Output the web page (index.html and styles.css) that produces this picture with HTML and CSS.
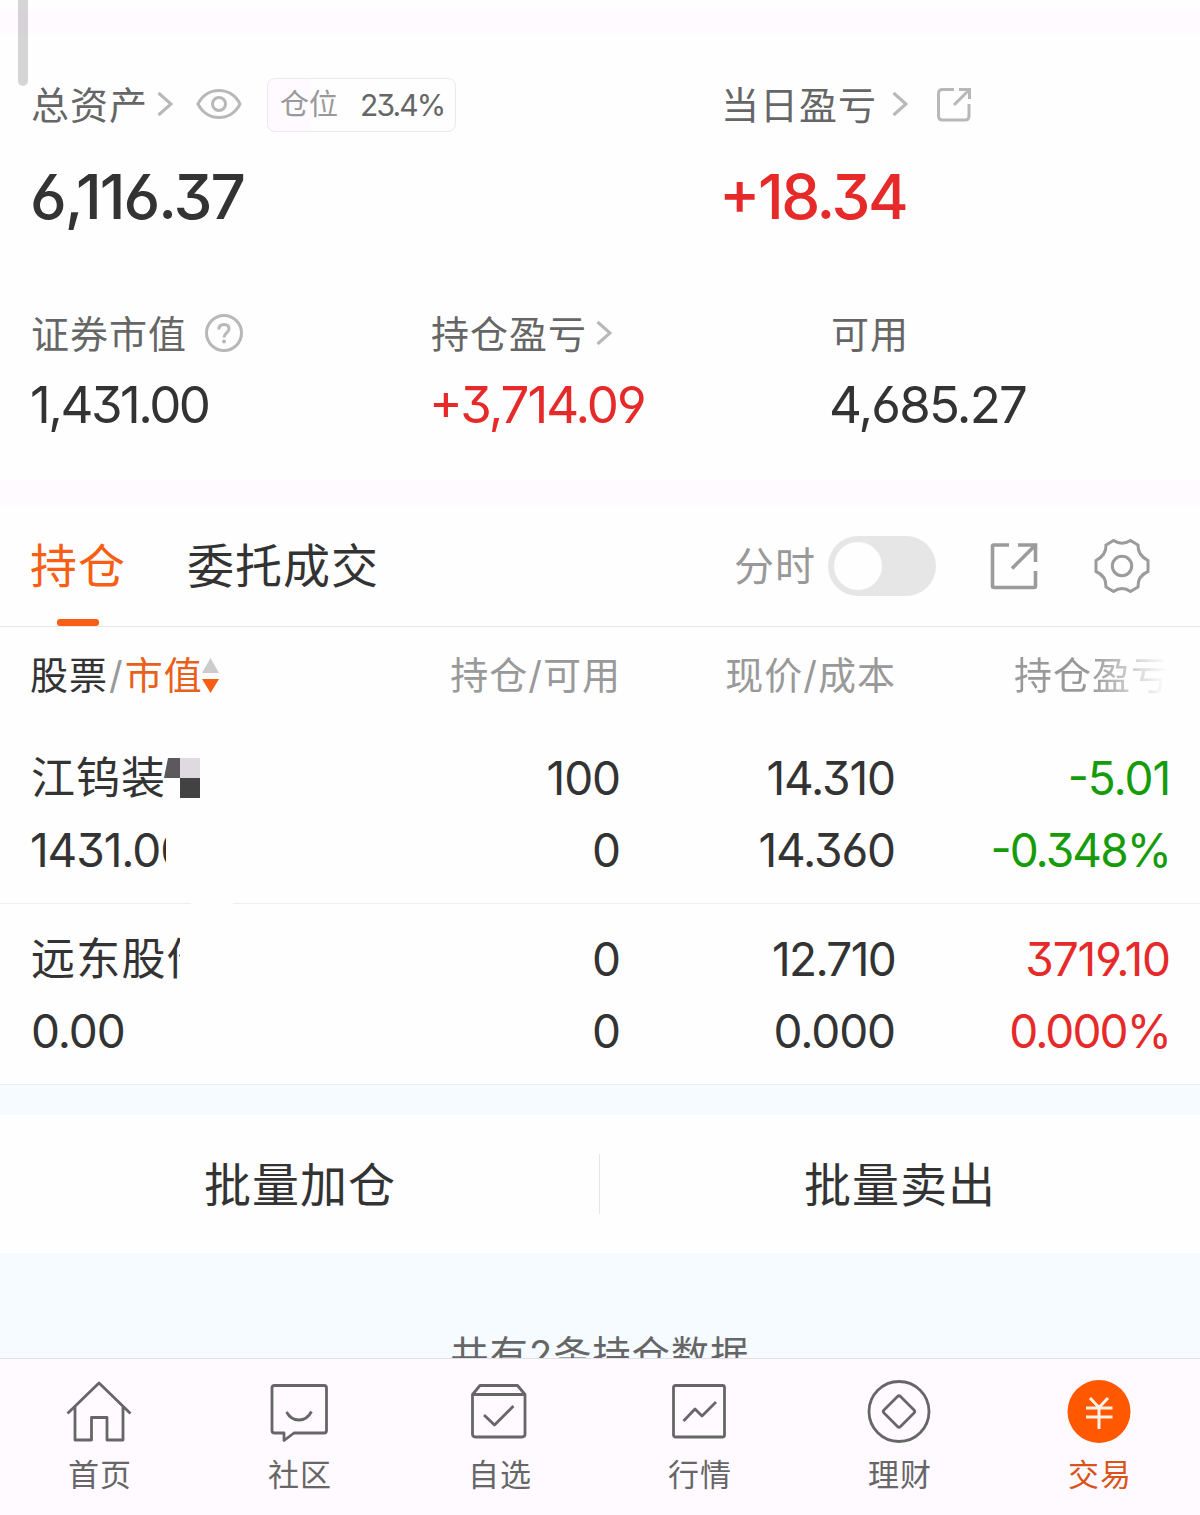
FILE: index.html
```html
<!DOCTYPE html>
<html lang="zh-CN">
<head>
<meta charset="utf-8">
<title>持仓</title>
<link rel="stylesheet" href="styles.css">
</head>
<body>
<main class="page">
  <div class="band band-top"></div>
  <section class="summary">
    <div class="summary-row labels-main">
      <div class="cell wide">
        <span class="label">总资产</span>
        <svg class="chev chev-a" width="16" height="26" viewBox="0 0 16 26"><path d="M1.500 2L14 13L1.500 24"/></svg>
        <svg class="eye" width="46" height="32" viewBox="0 0 46 32"><path d="M2 16C11-2 35-2 44 16C35 34 11 34 2 16Z"/><circle cx="23" cy="16" r="6.500"/></svg>
        <span class="badge"><span class="badge-name">仓位</span><span class="badge-value">23.4%</span></span>
      </div>
      <div class="cell">
        <span class="label">当日盈亏</span>
        <svg class="chev chev-b" width="16" height="26" viewBox="0 0 16 26"><path d="M1.500 2L14 13L1.500 24"/></svg>
        <svg class="share" width="36" height="36" viewBox="0 0 36 36"><path d="M18 2.500H6.500Q2.500 2.500 2.500 6.500V29Q2.500 33 6.500 33H29Q33 33 33 29V17M18 18L33 3M23 2.500H33.500V12"/></svg>
      </div>
    </div>
    <div class="summary-row values-main">
      <div class="cell wide"><span class="n-assets">6,116.37</span></div>
      <div class="cell"><span class="n-day red">+18.34</span></div>
    </div>
    <div class="summary-row labels-sub">
      <div class="cell third">
        <span class="label">证券市值</span>
        <svg class="help" width="40" height="40" viewBox="0 0 40 40"><circle cx="20" cy="20" r="17.500"/><path d="M14.800 16.500Q15 11.500 20 11.500T25 16.300C25 19.500 20 20 20 24.500"/><circle class="dot" cx="20" cy="28.500" r="2"/></svg>
      </div>
      <div class="cell third">
        <span class="label">持仓盈亏</span>
        <svg class="chev chev-c" width="16" height="26" viewBox="0 0 16 26"><path d="M1.500 2L14 13L1.500 24"/></svg>
      </div>
      <div class="cell"><span class="label">可用</span></div>
    </div>
    <div class="summary-row values-sub">
      <div class="cell third"><span class="n-market">1,431.00</span></div>
      <div class="cell third"><span class="n-profit red">+3,714.09</span></div>
      <div class="cell"><span class="n-cash">4,685.27</span></div>
    </div>
  </section>
  <div class="band"></div>
  <nav class="tabs">
    <span class="tab active">持仓</span>
    <span class="tab">委托成交</span>
    <div class="tools">
      <span class="tool-label">分时</span>
      <span class="switch"><span class="knob"></span></span>
      <svg class="tool-share" width="48" height="48" viewBox="0 0 48 48"><path d="M19 3H4Q2.500 3 2.500 4.500V44Q2.500 45.500 4 45.500H44Q45.500 45.500 45.500 44V29M28 3H45.500V20M22 26.500L45 3.500"/></svg>
      <svg class="gear" width="56" height="56" viewBox="0 0 56 56"><path d="M19.500 2.500Q28 8 36.500 2.500L44 7Q43.500 17 54 22.500V33.500Q43.500 38 44 49L36.500 53.500Q28 47.500 19.500 53.500L12 49Q12.500 38 2 33.500V22.500Q12.500 17 12 7Z"/><circle cx="28" cy="28" r="9.700"/></svg>
    </div>
  </nav>
  <section class="table">
    <div class="grid head">
      <div class="first"><span class="dark">股票</span><span class="slash">/</span><span class="orange">市值</span><svg class="sort" width="17" height="36" viewBox="0 0 17 36"><path fill="#ccc" d="M8.500 0L17 15H0Z"/><path fill="#f95f14" d="M0 21H17L8.500 35Z"/></svg></div>
      <div class="shift">持仓/可用</div>
      <div class="shift">现价/成本</div>
      <div class="fade">持仓盈亏</div>
    </div>
    <div class="grid holding divided">
      <div class="first"><span class="name">江钨装</span><svg class="mosaic" width="36" height="40" viewBox="0 0 36 40"><path fill="#5c595e" d="M4 0H16V20H0Z"/><path fill="#dfdadf" d="M16 0H36V20H16Z"/><path fill="#424242" d="M16 20H36V40H16Z"/></svg></div>
      <div>100</div>
      <div>14.310</div>
      <div class="green">-5.01</div>
      <div class="first"><span class="clip clip-value">1431.00</span></div>
      <div>0</div>
      <div>14.360</div>
      <div class="green percent">-0.348%</div>
    </div>
    <div class="grid holding last">
      <div class="first"><span class="name clip clip-name">远东股份</span></div>
      <div>0</div>
      <div class="tight">12.710</div>
      <div class="red">3719.10</div>
      <div class="first">0.00</div>
      <div>0</div>
      <div>0.000</div>
      <div class="red percent">0.000%</div>
    </div>
  </section>
  <div class="gap"></div>
  <section class="actions">
    <span class="action">批量加仓</span>
    <span class="divider"></span>
    <span class="action">批量卖出</span>
  </section>
  <div class="footer"><span>共有2条持仓数据</span></div>
  <nav class="bottom">
    <div class="item"><svg width="66" height="66" viewBox="0 0 66 66"><path d="M1.500 34.500L33 4L64.500 34.500M9 28V61H25.500V38.500H41V61H57V28"/></svg><span>首页</span></div>
    <div class="item"><svg width="66" height="66" viewBox="0 0 66 66"><path d="M8.500 6.500H58Q60.500 6.500 60.500 9V51.500Q60.500 54 58 54H28L18 61.500V54H8.500Q6 54 6 51.500V9Q6 6.500 8.500 6.500ZM20.500 33Q25 41 33 41T45.500 32.500"/></svg><span>社区</span></div>
    <div class="item"><svg width="66" height="66" viewBox="0 0 66 66"><path d="M6.500 15.500L14 6.500H51.500L59 15.500V55Q59 58 56 58H9.500Q6.500 58 6.500 55ZM6.500 15.500H59M18 36L28.500 46L47.500 27"/></svg><span>自选</span></div>
    <div class="item"><svg width="66" height="66" viewBox="0 0 66 66"><rect x="7.500" y="6.500" width="51" height="51.500" rx="2"/><path d="M17.500 42L29 30L36 37L50 23"/></svg><span>行情</span></div>
    <div class="item"><svg width="66" height="66" viewBox="0 0 66 66"><circle cx="33" cy="32.500" r="30"/><path d="M31.500 17.500Q33 16 34.500 17.500L48 31Q49.500 32.500 48 34L34.500 47.500Q33 49 31.500 47.500L18 34Q16.500 32.500 18 31Z"/></svg><span>理财</span></div>
    <div class="item current"><svg width="66" height="66" viewBox="0 0 66 66"><circle class="disc" cx="33" cy="32.500" r="31.500"/><path class="yen" d="M24 19L33 28.500L42 19M20 29H46.500M20 38H46.500M33 28V50"/></svg><span>交易</span></div>
  </nav>
  <div class="scrollbar"></div>
</main>
</body>
</html>
```
FILE: styles.css
```css
* { box-sizing: border-box; }
body {
  margin: 0;
  background: #fff;
  color: #333;
  font-family: "Inter", "Noto Sans CJK SC", sans-serif;
  font-feature-settings: "cv09", "cv03", "cv04", "case";
}
svg { display: block; flex: none; fill: none; stroke: #b9b7b9; stroke-width: 3; }
.page { position: relative; width: 1200px; height: 1515px; overflow: hidden; background: #fefefe; display: flex; flex-direction: column; }
.page > * { flex: none; }
.red { color: #e62a2a; }
.green { color: #169b0b; }
.orange { color: #e8601c; }
.dark { color: #333; }
.slash { padding: 0 1px; }

.band { height: 25px; background: #fefaff; }
.band-top { margin-top: 9px; height: 24px; }
.scrollbar { position: absolute; left: 18px; top: 0; width: 10px; height: 86px; border-radius: 0 0 5px 5px; background: rgba(0, 0, 0, .16); }

.summary { height: 447px; padding-left: 31px; padding-top: 41px; }
.summary-row { display: flex; align-items: center; white-space: nowrap; }
.cell { display: flex; align-items: center; }
.wide { width: 690px; }
.third { width: 400px; }
.label { padding-top: 2px; font-size: 38px; letter-spacing: 1px; line-height: 60px; color: #666; }
.labels-main { height: 60px; }
.values-main { height: 80px; margin-top: 22px; font-weight: 500; }
.labels-sub { height: 60px; margin-top: 67px; }
.values-sub { height: 70px; margin-top: 6px; }
.n-assets { font-size: 62px; letter-spacing: -2px; margin-left: -1px; }
.n-day { font-size: 62px; letter-spacing: -2.4px; margin-left: -2px; }
.n-market, .n-profit, .n-cash { font-size: 51px; }
.n-market { letter-spacing: -2.5px; margin-left: -1px; }
.n-profit { letter-spacing: -2px; margin-left: -2px; }
.n-cash { letter-spacing: -1.8px; margin-left: -2px; }
.chev-a { margin-left: 9px; }
.chev-b { margin-left: 15px; }
.chev-c { margin-left: 9px; }
.eye { margin-left: 23px; }
.badge { display: flex; align-items: center; margin-left: 25px; margin-top: 1px; width: 189px; height: 54px; padding-left: 12px; border: 1.5px solid #ebe9eb; border-radius: 8px; background: linear-gradient(90deg, #fefaff 43px, #fefefe 43px); }
.badge-name { padding-top: 1px; font-size: 29px; line-height: 50px; color: #999; width: 80px; }
.badge-value { font-size: 30px; letter-spacing: -1.9px; color: #666; }
.share { margin-left: 28px; margin-top: 2px; }
.help { margin-left: 17px; }
.help .dot { fill: #b9b7b9; stroke: none; }

.tabs { height: 122px; display: flex; padding-left: 30px; border-bottom: 1px solid #e8e8e8; white-space: nowrap; }
.tab { position: relative; font-size: 47px; letter-spacing: 1px; line-height: 122px; margin-right: 61px; }
.active { color: #f95f14; }
.active::after { content: ""; position: absolute; left: 27px; bottom: 0; width: 42px; height: 7px; border-radius: 3px; background: #f95f14; }
.tools { margin-left: auto; display: flex; align-items: center; padding-right: 50px; }
.tools svg { stroke: #9b9b9b; }
.tool-label { font-size: 40px; line-height: 120px; padding-top: 2px; letter-spacing: 1px; color: #999; }
.switch { width: 108px; height: 60px; margin-left: 12px; padding: 6px; border-radius: 30px; background: #e6e6e6; }
.knob { display: block; width: 48px; height: 48px; border-radius: 50%; background: #fefefe; }
.tool-share { margin-left: 54px; stroke-width: 3.6; }
.gear { margin-left: 56px; }

.grid { display: grid; grid-template-columns: 249px 340px 275px 275px; padding-left: 31px; text-align: right; white-space: nowrap; }
.head { height: 96px; line-height: 97px; font-size: 38px; letter-spacing: 1px; color: #999; }
.shift { margin-right: -1px; }
.head .first { margin-left: -1px; }
.first { display: flex; align-items: center; text-align: left; }
.sort { stroke: none; margin-left: -1px; }
.fade { -webkit-mask-image: linear-gradient(90deg, #000 195px, transparent 272px); mask-image: linear-gradient(90deg, #000 195px, transparent 272px); }
.holding { padding-top: 19px; height: 181px; grid-auto-rows: 72px; line-height: 72px; font-size: 46px; letter-spacing: -1.1px; }
.tight { letter-spacing: -1.7px; }
.percent { letter-spacing: -1.9px; }
.divided { background: linear-gradient(90deg, #eee 191px, transparent 191px, transparent 233px, #eee 233px) bottom / 100% 1px no-repeat; }
.last { height: 181px; border-bottom: 1px solid #ececee; }
.name { font-size: 44px; letter-spacing: 1px; }
.mosaic { stroke: none; margin-left: -2px; }
.clip { overflow: hidden; }
.clip-value { width: 136px; margin-left: -1px; letter-spacing: -1.1px; }
.clip-name { width: 149px; letter-spacing: 1.2px; }

.gap { height: 30px; background: #f5fbff; }
.actions { height: 138px; display: flex; align-items: center; }
.action { flex: 1; text-align: center; font-size: 47px; line-height: 138px; padding-top: 1px; letter-spacing: 1px; }
.divider { width: 1px; height: 60px; margin-left: -1px; background: #e6e6e6; }
.footer { height: 105px; padding-top: 71px; background: #f5fbff; overflow: hidden; text-align: center; font-size: 38px; letter-spacing: 1.2px; line-height: 60px; color: #666; }
.bottom { height: 157px; display: grid; grid-template-columns: repeat(6, 200px); border-top: 1px solid #e2e0e4; background: #fefaff; color: #666; }
.item { display: flex; flex-direction: column; align-items: center; padding-top: 20px; font-size: 31px; letter-spacing: 1px; line-height: 40px; }
.item svg { margin-left: -2px; stroke: #666; stroke-width: 2.8; stroke-linejoin: round; }
.item span { margin-top: 10px; }
.current { color: #d9541a; }
.item .disc { fill: #ff5800; stroke: none; }
.item .yen { stroke: #fdf0e6; stroke-width: 3; }
```
